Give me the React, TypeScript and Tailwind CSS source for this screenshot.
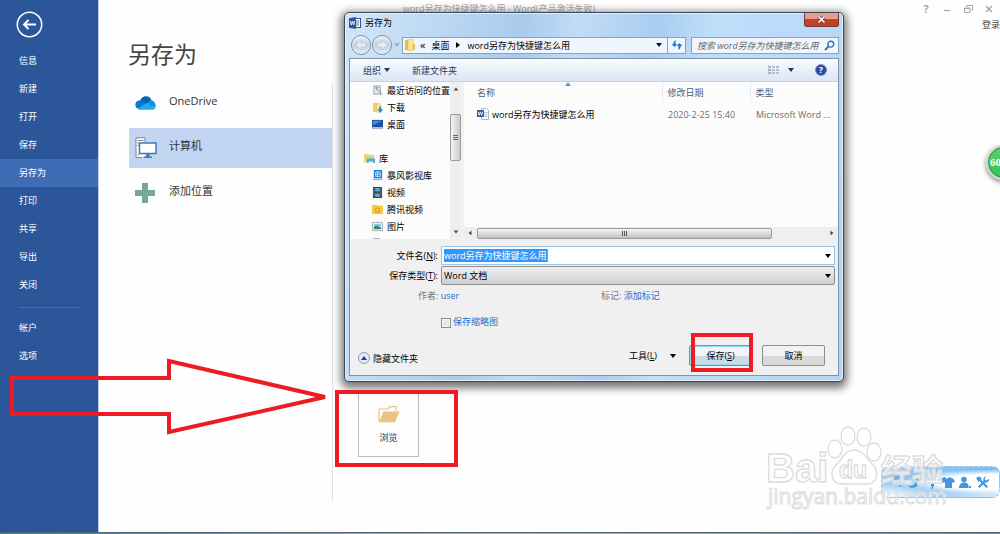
import React from 'react';
import clsx from 'clsx';

const menuItems = ['信息', '新建', '打开', '保存', '另存为', '打印', '共享', '导出', '关闭'];
const accountItems = ['帐户', '选项'];

const DOC_NAME = 'word另存为快捷键怎么用';

function Caret({ className, dir = 'down' }: { className?: string; dir?: 'up' | 'down' | 'left' | 'right' }) {
  const paths = {
    down: 'M1 2h6L4 6z',
    up: 'M1 6h6L4 2z',
    left: 'M6 1v6L2 4z',
    right: 'M2 1v6l4-3z',
  };
  return (
    <svg className={clsx('size-2 shrink-0', className)} viewBox="0 0 8 8" fill="currentColor" aria-hidden="true">
      <path d={paths[dir]} />
    </svg>
  );
}

function WordIcon() {
  return (
    <svg className="size-3 shrink-0" viewBox="0 0 12 12" aria-hidden="true">
      <rect x="5.5" y="1.5" width="6" height="9" fill="#fff" stroke="#2b579a" />
      <path d="M7 4h3M7 6h3M7 8h3" stroke="#2b579a" strokeWidth=".8" />
      <path d="M0 1.2 7 0v12L0 10.8z" fill="#2b579a" />
      <path d="m1.4 4 .9 4 1.2-3.8L4.7 8l.9-4" fill="none" stroke="#fff" strokeWidth=".9" />
    </svg>
  );
}

function DocIcon() {
  return (
    <svg className="size-3 shrink-0" viewBox="0 0 12 12" aria-hidden="true">
      <path d="M4.5 .5h5l2 2v9h-7z" fill="#fff" stroke="#9aa3ad" strokeWidth=".8" />
      <path d="M7.5 4.5h3M7.5 6.5h3M7.5 8.5h3" stroke="#8ba6cf" strokeWidth=".8" />
      <rect y="2" width="7" height="7" fill="#2b579a" />
      <path d="m1.2 3.7.9 3.6 1.3-3.4 1.3 3.4.9-3.6" fill="none" stroke="#fff" strokeWidth=".9" />
    </svg>
  );
}

function Sidebar() {
  return (
    <nav className="flex w-[99px] shrink-0 flex-col border-r border-[#c3d0e6] bg-[#2b579a] text-white">
      <button type="button" aria-label="返回" className="mt-[11px] ml-4 size-[27px]">
        <svg viewBox="0 0 27 27" fill="none" stroke="#fff">
          <circle cx="13.5" cy="13.5" r="12.2" strokeWidth="1.5" />
          <path d="M20 13.5H8.5M12.5 9 8 13.5l4.5 4.5" strokeWidth="2" />
        </svg>
      </button>
      <ul className="mt-[9px]">
        {menuItems.map((item) => (
          <li key={item}>
            <button
              type="button"
              className={clsx(
                'block h-7 w-full pl-[19px] text-left text-[9px] leading-7',
                item === '另存为' && 'bg-[#3e6db5]',
              )}
            >
              {item}
            </button>
          </li>
        ))}
      </ul>
      <hr className="mt-2 mr-[18px] ml-[19px] border-[#3e6db5]" />
      <ul className="mt-[6px]">
        {accountItems.map((item) => (
          <li key={item}>
            <button type="button" className="block h-7 w-full pl-[19px] text-left text-[9px] leading-7">
              {item}
            </button>
          </li>
        ))}
      </ul>
    </nav>
  );
}

function OneDriveIcon() {
  return (
    <svg className="h-[14px] w-[21px]" viewBox="0 0 21 14" aria-hidden="true">
      <path d="M5 5.5C5.5 2.5 8 .3 11 .3c2.5 0 4.7 1.4 5.5 4L12 8z" fill="#0364b8" />
      <path d="M2.5 12.5C-.8 10.5-.3 5.2 4 4.6c2-.6 4 .2 5.5 1.2L14 8.5 6 13z" fill="#0078d4" />
      <path d="M13 6.5c1.5-2.7 4-2.6 5.5-1.2 1.3 1 2.6 3.7 2 6L14 10z" fill="#1490df" />
      <path d="m2.5 12.4 8-4.6c.8-.4 1.5-.4 2.2 0l7.8 4c-.6 1.3-1.7 2-3.3 2H5c-1 0-1.8-.5-2.5-1.4z" fill="#28a8ea" />
    </svg>
  );
}

function ComputerIcon() {
  return (
    <svg className="h-[22px] w-[22px]" viewBox="0 0 22 22" fill="none" aria-hidden="true">
      <path d="M1 .8h9v19.700H1z" fill="#fff" />
      <path d="M7 20.5H1V.8h9V5" stroke="#777" strokeWidth=".9" />
      <path d="M2.5 3.5h6M2.5 6H4M2.5 8.5H4M4 18H2.5" stroke="#777" strokeWidth=".9" />
      <rect x="4.5" y="6" width="16.5" height="10.5" fill="#fff" stroke="#3f7abf" strokeWidth="1.5" />
      <path d="M11.5 17h3v2.5H17V21H8.5v-1.5h3z" fill="#3f7abf" />
    </svg>
  );
}

const places = [
  { name: 'OneDrive', icon: <OneDriveIcon /> },
  { name: '计算机', icon: <ComputerIcon /> },
  {
    name: '添加位置',
    icon: (
      <svg className="size-5" viewBox="0 0 20 20" aria-hidden="true">
        <path d="M7 0h6v7h7v6h-7v7H7v-7H0V7h7z" fill="#76a797" />
      </svg>
    ),
  },
];

function Backstage() {
  return (
    <main className="flex min-w-0 flex-1 flex-col pb-[31px]">
      <header className="flex h-[17px] text-[9px] text-[#a6a6a6]">
        <p className="flex-1 text-center leading-[17px]">{DOC_NAME} - Word(产品激活失败)</p>
        <div className="flex w-[101px] items-center justify-end gap-[11px] pr-[6px]">
          <button type="button" aria-label="帮助" className="w-[10px] text-[11px] leading-4 font-bold">?</button>
          <button type="button" aria-label="最小化" className="size-[10px]">
            <svg viewBox="0 0 10 10" stroke="currentColor"><path d="M2 6.5h6" strokeWidth="1.2" /></svg>
          </button>
          <button type="button" aria-label="还原" className="size-[10px]">
            <svg viewBox="0 0 10 10" fill="none" stroke="currentColor">
              <path d="M3.5 3V1.5h6V6H8" />
              <path d="M1.5 4H7v4.5H1.5zM1.5 4.5H7" />
            </svg>
          </button>
          <button type="button" aria-label="关闭" className="size-[10px]">
            <svg viewBox="0 0 10 10" stroke="currentColor"><path d="m2 2 6 6M8 2 2 8" strokeWidth="1.5" /></svg>
          </button>
        </div>
      </header>
      <a href="#login" className="self-end text-[9px] leading-4 text-[#444]">登录</a>
      <h1 className="mt-1 ml-[29px] h-[46px] text-[23px] leading-[34px] text-[#444]">另存为</h1>

      <div className="flex flex-1">
        <ul className="ml-[30px] flex w-[203px] shrink-0 flex-col gap-[5px]">
          {places.map(({ name, icon }) => (
            <li key={name}>
              <button
                type="button"
                className={clsx(
                  'flex h-10 w-full items-center pl-[6px] text-left text-[11px] text-[#333]',
                  name === '计算机' && 'bg-[#c2d5f2]',
                )}
              >
                <span className="flex w-[34px]">{icon}</span>
                <span className="pb-1">{name}</span>
              </button>
            </li>
          ))}
        </ul>
        <section className="flex flex-1 flex-col justify-end border-l border-[#e1e1e1] pb-11 pl-[25px]">
          <button
            type="button"
            className="flex h-16 w-[61px] flex-col items-center gap-2 border border-[#bababa] bg-[#fdfdfd] pt-3 text-[9px] text-[#333]"
          >
            <svg className="h-[17px] w-[22px]" viewBox="0 0 22 17" aria-hidden="true">
              <path d="M1 15.5V3h9l2-2.3h6V5" fill="none" stroke="#eac282" strokeWidth="1.2" />
              <path d="M5.5 5.5h16L17 16.3H.8z" fill="#eac282" />
            </svg>
            浏览
          </button>
        </section>
      </div>
    </main>
  );
}

const tree = [
  {
    name: '最近访问的位置',
    icon: (
      <>
        <path d="M2 1h7v9H2z" fill="#e9edf0" stroke="#98a4ad" />
        <path d="M1 8.5h10V11H1z" fill="#c3ccd3" />
        <path d="M4 3l3 4M7 3H4" stroke="#3b78b5" />
        <path d="M9 5v5" stroke="#81909b" />
      </>
    ),
  },
  {
    name: '下载',
    icon: (
      <>
        <path d="M1 1h5l1 10H1z" fill="#f2cf63" />
        <path d="M5 2h4v9H5z" fill="#fbe8a4" stroke="#dfb84d" strokeWidth=".6" />
        <path d="M8 5h2v3h2l-3 4-3-4h2z" fill="#1d87d6" />
      </>
    ),
  },
  {
    name: '桌面',
    icon: (
      <>
        <path d="M0 1h12v8H0z" fill="#1f4f9f" />
        <path d="M1 2h10L1 7z" fill="#4c8ae0" />
        <path d="M0 9h12v2H0z" fill="#a9b9ca" />
      </>
    ),
  },
  { name: '', icon: null },
  {
    name: '库',
    root: true,
    icon: (
      <>
        <path d="M0 1h5l1 1h5v8H0z" fill="#f0d479" />
        <path d="M1 3.5h10V6H1z" fill="#c5dc8b" />
        <path d="M3 6h9v5h-2V9H5v2H3z" fill="#52a9dc" />
      </>
    ),
  },
  {
    name: '暴风影视库',
    icon: (
      <>
        <path d="M2 0h9v9H2z" fill="#1480d8" />
        <path d="M4 2h5v5H4zM6 2v5M4 4.5h5" fill="none" stroke="#d5efff" strokeWidth=".9" />
        <path d="M1 9.5h10.5V11H1z" fill="#75b7e5" />
      </>
    ),
  },
  {
    name: '视频',
    icon: (
      <>
        <path d="M1 0h10v12H1z" fill="#36434f" />
        <path d="M3.5 1h5v4h-5zM3.5 7h5v4h-5z" fill="#55a9d3" />
        <path d="M2.2 1v10M9.8 1v10" stroke="#b9c5cc" strokeWidth=".8" strokeDasharray="1 1" />
        <path d="M4 4l4 4" stroke="#b74b35" />
      </>
    ),
  },
  {
    name: '腾讯视频',
    icon: (
      <>
        <path d="M0 1h5l1 1h6v9H0z" fill="#fbc73c" />
        <circle cx="6" cy="6.5" r="2.8" fill="#dc9c19" />
        <path d="M5 5v3l2.5-1.5z" fill="#fff0b8" />
      </>
    ),
  },
  {
    name: '图片',
    icon: (
      <>
        <path d="M.5 1.5h11v9H.5z" fill="#fff" stroke="#9ba6ae" />
        <path d="M2 3h8v3H2z" fill="#8ac7ee" />
        <path d="M2 6l3-1 5 2v2H2z" fill="#358472" />
      </>
    ),
  },
  {
    name: '文档',
    icon: <path d="M2 .5h6l3 3v8H2z" fill="#fff" stroke="#a0a9af" />,
  },
];

function FolderTree() {
  return (
    <div className="flex w-[111px] shrink-0 bg-[#fcfcfc]">
      <ul className="min-w-0 flex-1 overflow-hidden">
        {tree.map(({ name, icon, root }) => (
          <li key={name} className={clsx('flex h-[17px] items-center gap-1 whitespace-nowrap', root ? 'pl-[14px]' : 'pl-[22px]')}>
            {icon && (
              <svg className="size-[11px] shrink-0" viewBox="0 0 12 12" fill="none" aria-hidden="true">
                {icon}
              </svg>
            )}
            {name}
          </li>
        ))}
      </ul>
      <div className="flex w-[11px] flex-col items-center bg-[#eeeeee] py-[3px] text-[#444]">
        <Caret dir="up" className="scale-75" />
        <div className="mt-[21px] flex h-[47px] w-[11px] flex-col items-center justify-center gap-px rounded-xs border border-[#999] bg-linear-to-r from-[#f5f5f5] to-[#c9c9c9]">
          <span className="h-px w-[5px] bg-[#666]" />
          <span className="h-px w-[5px] bg-[#666]" />
          <span className="h-px w-[5px] bg-[#666]" />
        </div>
        <Caret className="mt-auto scale-75" />
      </div>
    </div>
  );
}

function FileList() {
  return (
    <div className="flex min-w-0 flex-1 flex-col border-l-3 border-[#edf3fa] bg-[#fcfcfc]">
      <table className="w-full table-fixed text-left whitespace-nowrap">
        <thead className="text-[#4c607a]">
          <tr className="h-5">
            <th className="relative w-[198px] pl-[13px] font-normal">
              名称
              <Caret dir="up" className="absolute top-[-2px] left-[100px] text-[#6a9cba]" />
            </th>
            <th className="w-[88px] border-l border-[#e3ebf4] pl-[5px] font-normal">修改日期</th>
            <th className="border-l border-[#e3ebf4] pl-[5px] font-normal">类型</th>
          </tr>
        </thead>
        <tbody className="text-[#6d6d6d]">
          <tr className="h-6">
            <td className="pl-[13px] text-black">
              <span className="flex items-center gap-[3px]">
                <DocIcon />
                {DOC_NAME}
              </span>
            </td>
            <td className="pl-[6px]">2020-2-25 15:40</td>
            <td className="pl-[6px]">Microsoft Word ...</td>
          </tr>
        </tbody>
      </table>
      <div className="mt-auto flex h-3 items-center justify-between bg-[#eeeeee] px-[2px] text-[#444]">
        <Caret dir="left" className="mr-[3px] scale-75" />
        <div className="flex h-[11px] w-[295px] items-center justify-center gap-px rounded-xs border border-[#999] bg-linear-to-b from-[#f5f5f5] to-[#c0c0c2]">
          <span className="h-[5px] w-px bg-[#555]" />
          <span className="h-[5px] w-px bg-[#555]" />
          <span className="h-[5px] w-px bg-[#555]" />
        </div>
        <Caret dir="right" className="ml-auto scale-75" />
      </div>
    </div>
  );
}

function NavBar() {
  return (
    <div className="flex h-[26px] items-center">
      <div className="flex items-center gap-px pl-[2px]">
        {['后退', '前进'].map((label, i) => (
          <button
            key={label}
            type="button"
            aria-label={label}
            className="flex size-5 items-center justify-center rounded-full border border-[#7d90a3] bg-linear-to-b from-[#e9f0f7] via-[#c1d1e1] to-[#dfeaf5] shadow-[inset_0_0_0_1px_#ffffffa0]"
          >
            <svg className={clsx('size-3', i === 1 && 'rotate-180')} viewBox="0 0 12 12" aria-hidden="true">
              <path d="M1 6l5-5v3h5v4H6v3z" fill="#e6eef6" stroke="#b2c1d1" strokeWidth=".6" />
            </svg>
          </button>
        ))}
        <Caret className="text-[#9db3c9]" />
      </div>
      <div className="ml-px flex h-[17px] flex-1 items-center border border-[#8ba3ba] bg-[#eff6fd]">
        <svg className="ml-[2px] h-3 w-[11px]" viewBox="0 0 11 12" aria-hidden="true">
          <path d="M0 1h5v10H0z" fill="#e7bd4c" />
          <path d="M3 0h5v11l-5 1z" fill="#fbe399" stroke="#dbb352" strokeWidth=".5" />
          <path d="M8 5h2v6H8z" fill="#e7bd4c" />
        </svg>
        <span className="ml-1 text-[11px] leading-3">«</span>
        <span className="ml-[6px]">桌面</span>
        <Caret dir="right" className="mx-[5px]" />
        <span>{DOC_NAME}</span>
        <Caret className="mr-1 ml-auto text-[#0a1440]" />
        <button type="button" aria-label="刷新" className="flex h-full w-[18px] items-center justify-center border-l border-[#8ba3ba]">
          <svg className="size-3" viewBox="0 0 12 12" fill="#2277c8" aria-hidden="true">
            <path d="M4.5 1 2.5 3v2H.6l2.9 3 2.8-3H4.5z" />
            <path d="M7.5 11l2-2V7h1.900L8.5 4 5.700 7h1.800z" />
          </svg>
        </button>
      </div>
      <label className="ml-[5px] flex h-[17px] w-[148px] items-center border border-[#8ba3ba] bg-[#eff6fd] pr-[3px] pl-[5px]">
        <input
          type="text"
          aria-label="搜索"
          placeholder={`搜索 ${DOC_NAME}`}
          className="min-w-0 flex-1 italic outline-none placeholder:text-[#666]"
        />
        <svg className="size-[11px] shrink-0" viewBox="0 0 11 11" fill="none" stroke="#2d6fb4" aria-hidden="true">
          <circle cx="6.8" cy="4.2" r="2.9" strokeWidth="1.4" />
          <path d="M4.5 6.5 1 10" strokeWidth="1.8" />
        </svg>
      </label>
    </div>
  );
}

function SaveForm() {
  return (
    <form className="flex flex-col bg-[#f0f0f0] pt-[7px] pr-[3px]" onSubmit={(e) => e.preventDefault()}>
      <div className="grid grid-cols-[88px_1fr] items-center gap-x-[3px] gap-y-px">
        <label htmlFor="file-name" className="text-right">文件名(<u>N</u>):</label>
        <div className="flex h-[19px] items-center border border-[#9ac3e6] bg-white px-[2px]">
          <input
            id="file-name"
            defaultValue={DOC_NAME}
            className="field-sizing-content h-[13px] border-r border-[#e08a3c] bg-[#3297fd] text-white outline-none"
          />
          <Caret className="ml-auto" />
        </div>
        <label htmlFor="file-type" className="text-right">保存类型(<u>T</u>):</label>
        <div className="relative">
          <select
            id="file-type"
            className="block h-[19px] w-full appearance-none rounded-xs border border-[#8e8e8e] bg-linear-to-b from-[#f0f0f0] to-[#cfcfcf] pl-[2px]"
          >
            <option>Word 文档</option>
          </select>
          <Caret className="pointer-events-none absolute top-[6px] right-[3px]" />
        </div>
      </div>

      <div className="flex pt-1 pl-[68px] leading-[14px] text-[#777]">
        <p className="w-[183px]">作者: <a href="#author" className="text-[#1a6fce]">user</a></p>
        <p>标记: <a href="#tags" className="text-[#1a6fce]">添加标记</a></p>
      </div>

      <label className="mt-3 flex items-center gap-[2px] pl-[91px] leading-[14px] text-[#1a6fce]">
        <input
          type="checkbox"
          className="mt-[2px] size-[10px] appearance-none border border-[#8e8f8f] bg-[#e6e7e9] shadow-[inset_0_0_0_1px_#f6f6f6]"
        />
        保存缩略图
      </label>

      <div className="mt-4 flex items-center pr-[10px] pb-[9px] pl-2">
        <button type="button" className="flex items-center gap-[3px] pt-[5px]">
          <span className="flex size-3 items-center justify-center rounded-full border border-[#8b9cb5] bg-[#e3eaf5] text-[#1c3f94]">
            <Caret dir="up" />
          </span>
          隐藏文件夹
        </button>
        <button type="button" className="ml-auto flex items-center gap-3">
          <span>工具(<u>L</u>)</span>
          <Caret />
        </button>
        <div className="relative ml-3">
          <button
            type="submit"
            className="block h-[21px] w-[63px] rounded-xs border border-[#3fa7d4] bg-linear-to-b from-[#eef4f8] from-50% to-[#cddbe4] to-50% shadow-[inset_0_0_0_1px_#8fdcf5]"
          >
            保存(<u>S</u>)
          </button>
          <span className="pointer-events-none absolute -top-3 -right-px -bottom-[6px] left-[2px] border-4 border-[#ed1c24]" />
        </div>
        <button
          type="button"
          className="ml-[10px] h-[21px] w-[63px] rounded-xs border border-[#8e8e8e] bg-linear-to-b from-[#f2f2f2] from-50% to-[#dadada] to-50%"
        >
          取消
        </button>
      </div>
    </form>
  );
}

function SaveAsDialog() {
  return (
    <div
      role="dialog"
      aria-label="另存为"
      className="absolute top-3 left-[344px] w-[500px] rounded-[5px] border border-[#3a4754] bg-[#b9d8f6] bg-linear-[100deg,#d3e6f8_0%,#c3dcf5_12%,#a9cbec_32%,#c1dcf6_42%,#a9cdf0_56%,#bfdefa_66%,#b5d5f5_100%] px-1 pb-[5px] text-[9px] leading-[13px] text-black shadow-[0_3px_9px_3px_rgba(0,0,0,0.55),inset_0_0_0_1px_#e4f1fd]"
    >
      <div className="flex h-[19px] items-center">
        <WordIcon />
        <h2 className="ml-1">另存为</h2>
        <button
          type="button"
          aria-label="关闭"
          className="ml-auto flex h-[14px] w-[35px] items-center justify-center self-start rounded-b-[3px] border border-t-0 border-[#6f3a34] bg-linear-to-b from-[#e3a08f] from-45% to-[#c3402a] to-50%"
        >
          <svg className="size-[9px]" viewBox="0 0 9 9" aria-hidden="true">
            <path d="m1.5 1.5 6 6M7.5 1.5l-6 6" stroke="#6b3a38" strokeWidth="3" />
            <path d="m1.5 1.5 6 6M7.5 1.5l-6 6" stroke="#fff" strokeWidth="1.7" />
          </svg>
        </button>
      </div>

      <NavBar />

      <div className="border border-[#7e93a8]">
        <div className="flex h-[23px] items-center border-b border-[#c3d2e3] bg-linear-to-b from-[#fafcfe] via-[#e8f0f9] to-[#dce7f4] pr-[11px] pl-[13px] text-[#1e395b]">
          <button type="button" className="flex items-center gap-[2px]">组织 <Caret /></button>
          <button type="button" className="ml-[21px]">新建文件夹</button>
          <button type="button" aria-label="更改视图" className="ml-auto flex items-center gap-[7px]">
            <svg className="h-[10px] w-3" viewBox="0 0 12 10" aria-hidden="true">
              <path d="M1 1h2v2H1zM1 7h2v2H1z" fill="#d99a93" />
              <path d="M1 4h2v2H1z" fill="#8fb2d4" />
              <path d="M4 2h3M8 2h3M4 5h3M8 5h3M4 8h3M8 8h3" stroke="#7c8ea5" />
              <path d="M.5 0v10" stroke="#9aa9ba" strokeWidth=".6" />
            </svg>
            <Caret />
          </button>
          <button
            type="button"
            aria-label="帮助"
            className="ml-5 size-3 rounded-full border border-[#8a95b8] bg-[#2547b0] text-[9px] leading-[10px] font-bold text-white"
          >
            ?
          </button>
        </div>
        <div className="flex h-[157px]">
          <FolderTree />
          <FileList />
        </div>
        <SaveForm />
      </div>
    </div>
  );
}

function ImeBar() {
  return (
    <div className="absolute right-0 bottom-9 flex h-8 w-[119px] items-center rounded-lg border border-dashed border-[#8cc4ec] bg-[radial-gradient(ellipse_at_95%_50%,#ffffff_0,#ffffff_35%,transparent_60%),radial-gradient(ellipse_at_5%_95%,#ffffff_0,transparent_35%),linear-gradient(165deg,#9fcdf0,#7bbcf1_50%,#cfe7fa_95%)] pl-3 text-[#3e97e0]">
      <span className="text-[12px] leading-4">中</span>
      <svg className="h-[13px] w-[86px]" viewBox="0 0 86 13" fill="currentColor" aria-hidden="true">
        <path d="M9 1c3 4 0 10-7 9 3 3 9 2 10.500-2C13.300 5 12 2 9 1z" />
        <path d="M25 8h3v2l-2 3h-1l1-3h-1z" />
        <path d="M36 2l3-1c1 2 3 2 4 0l4 1.500 2 3-2 1.500-1-1v6h-7V6l-2 1-2-2z" />
        <circle cx="58" cy="3.5" r="2.8" />
        <path d="M53 12c0-7 9-7 9.500-2.500V12zM63 10h2v2h-2z" />
        <path d="M70 2l3-1.500 3 2-1 1 7 7-1.500 1.500-7-7-1 1zM80 .5 78.500 3l1.500 1.500L83 3c.5 2-1.500 4-4 3.500L73.500 12 72 10.500 77.500 5C77 2.500 78 .5 80 .5z" />
      </svg>
    </div>
  );
}

function Watermark() {
  return (
    <svg
      className="pointer-events-none absolute right-[50px] bottom-4 h-[94px] w-[190px]"
      viewBox="0 0 190 94"
      fill="#ffffffb0"
      stroke="#dcdcdc"
      strokeWidth="1.3"
    >
      <text x="6" y="58" fontFamily="Liberation Sans, sans-serif" fontWeight="700" fontSize="40">Bai</text>
      <ellipse cx="75" cy="25" rx="7" ry="9" />
      <ellipse cx="88" cy="12" rx="7" ry="9" />
      <ellipse cx="104" cy="13" rx="7" ry="9" />
      <ellipse cx="114" cy="28" rx="7" ry="9" />
      <path d="M94 26c9 0 12 8 18 14 9 8 4 20-5 20H82c-10 0-14-12-5-20 6-6 8-14 17-14z" />
      <text x="79" y="54" fontFamily="Liberation Sans, sans-serif" fontWeight="700" fontSize="23">du</text>
      <text x="121" y="57" fontFamily="Noto Sans CJK SC, sans-serif" fontWeight="700" fontSize="31">经验</text>
      <text x="8" y="80" fontFamily="Open Sans, sans-serif" fontSize="21" strokeWidth="1">jingyan.baidu.com</text>
    </svg>
  );
}

export default function App() {
  return (
    <div className="relative flex min-h-screen flex-col overflow-hidden bg-[#fefefe] font-['Open_Sans','Noto_Sans_CJK_SC',sans-serif]">
      <div className="flex flex-1">
        <Sidebar />
        <Backstage />
      </div>
      <footer className="h-[2px] border-t border-[#56666f] bg-linear-to-r from-[#3c7ba0] via-[#a8adb0] to-[#6f8fa0]" />

      <SaveAsDialog />

      <div className="absolute top-[145px] -right-[21px] size-[35px] rounded-full border-2 border-[#d5d5d5] bg-linear-to-b from-[#5ccf6e] to-[#39c155] pl-[2px] font-['Liberation_Serif',serif] text-[11px] leading-[31px] font-bold text-white shadow-[0_2px_5px_#00000080,inset_0_0_0_1px_#2c9a44]">
        60
      </div>

      <ImeBar />
      <Watermark />

      <svg className="pointer-events-none absolute top-[355px] left-[8px] h-[82px] w-[322px]" viewBox="0 0 322 82" fill="none" aria-hidden="true">
        <path d="M4 23h157V6l156 36-156 35V59H4z" stroke="#ed1c24" strokeWidth="4" />
      </svg>
      <div className="pointer-events-none absolute top-[390px] left-[335px] h-[77px] w-[123px] border-4 border-[#ed1c24]" />
    </div>
  );
}
